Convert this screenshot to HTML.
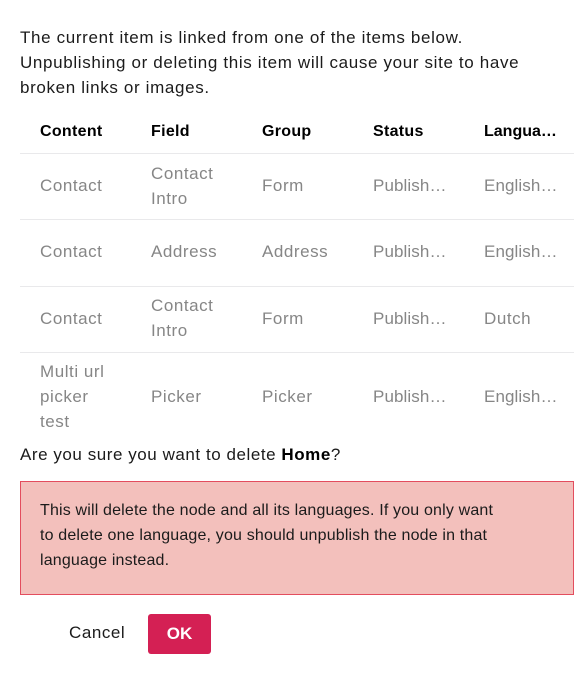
<!DOCTYPE html>
<html><head><meta charset="utf-8"><style>
html,body{margin:0;padding:0;background:#fff;width:583px;height:673px;overflow:hidden}
body{font-family:"Liberation Sans",sans-serif;font-size:17px;letter-spacing:0.55px;color:#1b264f;position:relative}
.a{position:absolute;white-space:nowrap;line-height:25px}
.t{color:#1b1b1b}
.h{font-weight:bold;color:#000;font-size:16px;letter-spacing:0.3px}
.g{color:#868686}
.e{letter-spacing:0.1px}
.line{position:absolute;left:20px;width:554px;height:1px;background:#e9e9eb}
</style></head><body>
<div class="a t" style="left:20px;top:25px;letter-spacing:0.65px">The current item is linked from one of the items below.<br>Unpublishing or deleting this item will cause your site to have<br>broken links or images.</div>

<div class="a h" style="left:40px;top:119px">Content</div>
<div class="a h" style="left:151px;top:119px">Field</div>
<div class="a h" style="left:262px;top:119px">Group</div>
<div class="a h" style="left:373px;top:119px">Status</div>
<div class="a h" style="left:484px;top:119px;letter-spacing:0">Langua…</div>
<div class="line" style="top:153px"></div>

<div class="a g" style="left:40px;top:173px">Contact</div>
<div class="a g" style="left:151px;top:161px">Contact<br>Intro</div>
<div class="a g" style="left:262px;top:173px">Form</div>
<div class="a g e" style="left:373px;top:173px">Publish…</div>
<div class="a g e" style="left:484px;top:173px">English…</div>
<div class="line" style="top:219px"></div>

<div class="a g" style="left:40px;top:239px">Contact</div>
<div class="a g" style="left:151px;top:239px">Address</div>
<div class="a g" style="left:262px;top:239px">Address</div>
<div class="a g e" style="left:373px;top:239px">Publish…</div>
<div class="a g e" style="left:484px;top:239px">English…</div>
<div class="line" style="top:286px"></div>

<div class="a g" style="left:40px;top:306px">Contact</div>
<div class="a g" style="left:151px;top:293px">Contact<br>Intro</div>
<div class="a g" style="left:262px;top:306px">Form</div>
<div class="a g e" style="left:373px;top:306px">Publish…</div>
<div class="a g" style="left:484px;top:306px">Dutch</div>
<div class="line" style="top:352px"></div>

<div class="a g" style="left:40px;top:359px">Multi url<br>picker<br>test</div>
<div class="a g" style="left:151px;top:384px">Picker</div>
<div class="a g" style="left:262px;top:384px">Picker</div>
<div class="a g e" style="left:373px;top:384px">Publish…</div>
<div class="a g e" style="left:484px;top:384px">English…</div>

<div class="a t" style="left:20px;top:442px">Are you sure you want to delete <b style="color:#000">Home</b>?</div>

<div style="position:absolute;left:20px;top:481px;width:552px;height:112px;background:#f3c0bc;border:1px solid #e34d5e"></div>
<div class="a t" style="left:40px;top:498px;font-size:16px;letter-spacing:0.17px">This will delete the node and all its languages. If you only want<br>to delete one language, you should unpublish the node in that<br>language instead.</div>

<div class="a t" style="left:69px;top:620px">Cancel</div>
<div style="position:absolute;left:148px;top:614px;width:63px;height:40px;background:#d42054;border-radius:3px;color:#fff;font-weight:bold;font-size:17px;letter-spacing:0;line-height:40px;text-align:center">OK</div>
</body></html>
